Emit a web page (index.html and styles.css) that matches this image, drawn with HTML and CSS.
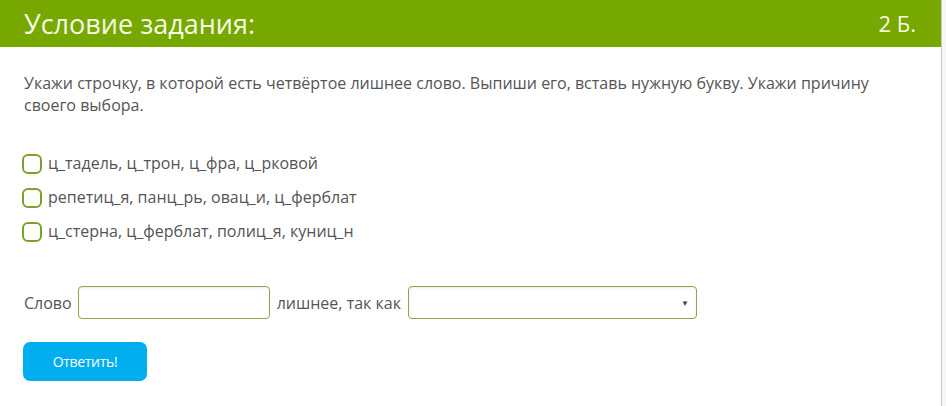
FILE: index.html
```html
<!DOCTYPE html>
<html lang="ru">
<head>
    <meta charset="UTF-8">
    <title>Условие задания</title>
    <link rel="stylesheet" href="styles.css">
</head>
<body>
    <div class="task">
        <div class="task-header">
            <div class="task-title">Условие задания:</div>
            <div class="task-points">2 Б.</div>
        </div>

        <div class="task-body">
            <p class="task-text">Укажи строчку, в которой есть четвёртое лишнее слово. Выпиши его, вставь нужную букву. Укажи причину своего выбора.</p>

            <div class="options">
                <label class="option"><span class="check"></span>ц_тадель, ц_трон, ц_фра, ц_рковой</label>
                <label class="option"><span class="check"></span>репетиц_я, панц_рь, овац_и, ц_ферблат</label>
                <label class="option"><span class="check"></span>ц_стерна, ц_ферблат, полиц_я, куниц_н</label>
            </div>

            <div class="answer-row">
                <span>Слово</span>
                <input class="word-input" type="text">
                <span>лишнее, так как</span>
                <div class="reason-select"><span class="arrow">▼</span></div>
            </div>

            <button class="submit-button">Ответить!</button>
        </div>
    </div>
</body>
</html>
```

FILE: styles.css
```css
body {
    margin: 0;
    padding: 0;
    background-color: #f7f7f7;
    font-family: 'Open Sans', 'Noto Sans', sans-serif;
    color: #555;
}

.task {
    width: 941px;
    height: 406px;
    background-color: white;
    border-right: 1px solid #c8c8c8;
}

.task-header {
    height: 47px;
    background-color: #76a800;
    color: #f6fbe6;
    display: flex;
    justify-content: space-between;
    align-items: center;
    padding: 0 25px 0 24px;
}

.task-title {
    font-size: 27px;
    margin-top: -1px;
}

.task-points {
    font-size: 22px;
    margin-top: -1px;
}

.task-body {
    padding: 25px 24px 0 24px;
}

.task-text {
    margin: 0;
    font-size: 16px;
    line-height: 22px;
    padding-right: 40px;
}

.options {
    display: flex;
    flex-direction: column;
    gap: 13px;
    margin-top: 37px;
}

.option {
    display: flex;
    align-items: center;
    gap: 6px;
    font-size: 16px;
    line-height: 21px;
    margin-left: -2px;
}

.check {
    width: 16px;
    height: 16px;
    border: 2px solid #7ca12a;
    border-radius: 6px;
    flex-shrink: 0;
}

.answer-row {
    display: flex;
    align-items: center;
    gap: 7px;
    margin-top: 44px;
    font-size: 16px;
}

.word-input {
    width: 192px;
    height: 33px;
    box-sizing: border-box;
    border: 1px solid #8aa84a;
    border-radius: 4px;
    box-shadow: inset 0 1px 2px rgba(0, 0, 0, 0.08);
    margin: 0 0 0 -1px;
    padding: 0;
}

.reason-select {
    width: 289px;
    height: 33px;
    box-sizing: border-box;
    border: 1px solid #8aa84a;
    border-radius: 4px;
    box-shadow: inset 0 1px 2px rgba(0, 0, 0, 0.08);
    display: flex;
    justify-content: flex-end;
    align-items: center;
    padding-right: 7px;
}

.arrow {
    font-size: 8px;
    color: #444;
}

.submit-button {
    margin-top: 23px;
    width: 124px;
    height: 39px;
    background-color: #00aeef;
    color: white;
    border: none;
    border-radius: 7px;
    font-family: 'Open Sans', sans-serif;
    font-size: 14px;
    letter-spacing: -0.3px;
    cursor: pointer;
    margin-left: -1px;
}
```
